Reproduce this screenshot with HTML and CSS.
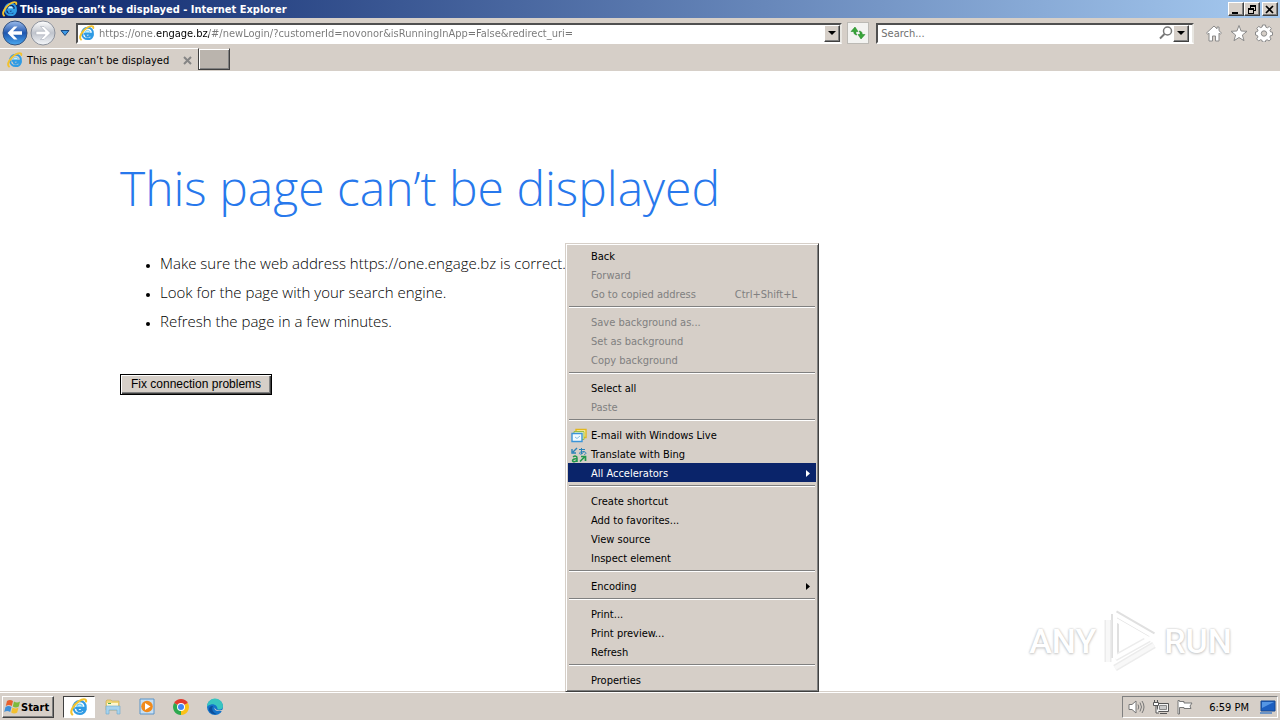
FILE: index.html
```
<!DOCTYPE html>
<html lang="en">
<head>
  <meta charset="UTF-8">
  <title>This page can’t be displayed - Internet Explorer</title>
  <link rel="stylesheet" href="styles.css">
</head>
<body>

  <!-- shared icons -->
  <svg class="defs" width="0" height="0">
    <defs>
      <symbol id="ie" viewBox="0 0 16 16">
        <path d="M4.600 8.700h9.300c.2-3.700-1.800-5.900-5.200-5.900s-5.600 2.400-5.600 5.700 2.300 5.600 5.700 5.600c2.400 0 4-1.100 4.800-3.300h-3.200c-.4.6-.9.9-1.600.9-1.400 0-2.200-1-2.200-2.400" fill="none" stroke="#2f9be4" stroke-width="2"/>
        <path d="M6 7.300h5c-.1-1.300-1-1.900-2.400-1.900S6.200 6 6 7.300z" fill="#e8f5fd" stroke="#6ccaf4" stroke-width="1"/>
        <path d="M2 14.600C-.6 12.200 3.200 6 7.700 3 11.300.600 14.600.300 14.300 3" fill="none" stroke="#f3c22e" stroke-width="1.900" stroke-linecap="round"/>
      </symbol>
    </defs>
  </svg>

  <header class="titlebar">
    <svg class="icon" width="16" height="16"><use href="#ie"/></svg>
    <span class="title">This page can’t be displayed - Internet Explorer</span>
    <div class="window-buttons">
      <button class="win-btn" aria-label="Minimize"><svg width="10" height="9"><path d="M1 7h6v2H1z"/></svg></button>
      <button class="win-btn" aria-label="Restore"><svg width="10" height="9"><path d="M3 0h6v6H7V5h1V2H4v1H3zM1 3h6v6H1zM2 5v3h4V5z" fill-rule="evenodd"/></svg></button>
      <button class="win-btn close" aria-label="Close"><svg width="10" height="9"><path d="M1 1l7 7M8 1L1 8" stroke="#000" stroke-width="1.700"/></svg></button>
    </div>
  </header>

  <nav class="toolbar">
    <button class="plain" aria-label="Back">
      <svg width="26" height="26" viewBox="0 0 26 26">
        <defs><linearGradient id="blue" x2="0" y2="1"><stop offset="0" stop-color="#9dbdec"/><stop offset=".5" stop-color="#1f56ae"/><stop offset="1" stop-color="#4aa9f0"/></linearGradient></defs>
        <circle cx="13" cy="13" r="12" fill="url(#blue)" stroke="#35527f"/>
        <path d="M5.500 13L12 6.500h3.500L11 11.300h9v3.400h-9l4.500 4.800H12z" fill="#fff"/>
      </svg>
    </button>
    <button class="plain" aria-label="Forward">
      <svg width="26" height="26" viewBox="0 0 26 26">
        <defs><linearGradient id="silver" x2="0" y2="1"><stop offset="0" stop-color="#fff"/><stop offset=".5" stop-color="#c0c4cc"/><stop offset="1" stop-color="#f6f8fb"/></linearGradient></defs>
        <circle cx="13" cy="13" r="12" fill="url(#silver)" stroke="#8d929c"/>
        <path d="M20.500 13L14 6.500h-3.500l4.500 4.800H6v3.400h9l-4.500 4.800H14z" fill="#fff" stroke="#a9afba" stroke-width=".6"/>
      </svg>
    </button>
    <button class="plain recent" aria-label="Recent pages">
      <svg width="10" height="8"><path d="M1 1.500h8L5 6.500z" fill="#3d9ae6" stroke="#17457c"/></svg>
    </button>
    <div class="field address">
      <svg class="icon" width="16" height="16"><use href="#ie"/></svg>
      <input class="url" type="text" aria-label="Address" value="https://one.engage.bz/#/newLogin/?customerId=novonor&amp;isRunningInApp=False&amp;redirect_uri=">
      <button class="drop" aria-label="Show address list"><svg width="8" height="4"><path d="M0 0h8L4 4z"/></svg></button>
    </div>
    <button class="refresh" aria-label="Refresh">
      <svg width="16" height="16" viewBox="0 0 16 16"><path d="M5 2L1 6.500h2.800V7c0 2 1.200 2.800 3.200 3-1-1-1.200-2-1-3.500h2z" fill="#3aa63a" stroke="#16801e" stroke-width=".5"/><path d="M11 14l4-4.500h-2.800V9c0-2-1.200-2.800-3.200-3 1 1 1.200 2 1 3.500H8z" fill="#3aa63a" stroke="#16801e" stroke-width=".5"/></svg>
    </button>
    <div class="field search">
      <input type="text" aria-label="Search" placeholder="Search...">
      <svg width="14" height="14" viewBox="0 0 14 14"><circle cx="8.500" cy="5" r="4" fill="none" stroke="#777" stroke-width="1.500"/><path d="M5.500 8L1 12.500" stroke="#777" stroke-width="2"/></svg>
      <button class="drop" aria-label="Search options"><svg width="8" height="4"><path d="M0 0h8L4 4z"/></svg></button>
    </div>
    <div class="tools">
      <button class="plain" aria-label="Home"><svg width="18" height="18" viewBox="0 0 18 18"><path d="M9 2L1.500 9l1.300 1.200L4 9.200V17h3.500v-5h3v5H14V9.200l1.200 1 1.300-1.200L14 6.700V3h-2v1.800z" fill="#fff" stroke="#8a8a8a"/></svg></button>
      <button class="plain" aria-label="Favorites"><svg width="18" height="18" viewBox="0 0 18 18"><path d="M9 1.500l2.100 5.500 5.900.3-4.600 3.700 1.600 5.700-5-3.200-5 3.200L5.600 11 1 7.300 6.900 7z" fill="#fff" stroke="#8a8a8a"/></svg></button>
      <button class="plain" aria-label="Tools"><svg width="18" height="18" viewBox="0 0 18 18"><path d="M7.500 1h3l.4 2.200 1.500.6 1.900-1.300 2 2-1.300 1.900.6 1.500 1.900.3v3l-2 .4-.6 1.500 1.200 1.900-2 2-1.900-1.200-1.500.6-.3 1.600h-3l-.4-1.700-1.500-.6-1.800 1.300-2.100-2.100L3 13l-.6-1.500L.5 11V8l1.900-.4L3 6.100 1.700 4.400l2.100-2 1.800 1.200 1.500-.6z" fill="#fff" stroke="#8a8a8a"/><circle cx="9" cy="9.500" r="2.700" fill="#d6cfc8" stroke="#8a8a8a"/></svg></button>
    </div>
  </nav>

  <div class="tabs">
    <div class="tab">
      <svg class="icon" width="16" height="16"><use href="#ie"/></svg>
      <span>This page can’t be displayed</span>
      <button class="plain tab-close" aria-label="Close tab"><svg width="9" height="9"><path d="M1 1l7 7M8 1L1 8" stroke="#858585" stroke-width="2"/></svg></button>
    </div>
    <button class="new-tab" aria-label="New tab"></button>
  </div>

  <main class="page">
    <h1>This page can’t be displayed</h1>
    <ul>
      <li>Make sure the web address https://one.engage.bz is correct.</li>
      <li>Look for the page with your search engine.</li>
      <li>Refresh the page in a few minutes.</li>
    </ul>
    <button class="fix">Fix connection problems</button>

    <div class="watermark">
      <span>ANY</span>
      <svg width="60" height="64" viewBox="0 0 60 64">
        <g fill="none" stroke-linejoin="round">
          <path d="M15 5v44M15 5l38 22" stroke="#e0e0e0" stroke-width="8"/>
          <path d="M8 11v42M15 49l34-19M15 59l39-23" stroke="#ececec" stroke-width="7"/>
          <path d="M8 11v42M15 59l39-23" stroke="#f8f8f8" stroke-width="4"/>
          <path d="M15 49V5l38 22-4 3-33-19M15 49l34-19" stroke="#fff" stroke-width="4"/>
        </g>
      </svg>
      <span>RUN</span>
    </div>
  </main>

  <footer class="taskbar">
    <button class="start">
      <svg width="17" height="16" viewBox="0 0 17 16"><path d="M3 2c2-1.400 4-1.300 6 0L7.800 7c-2-1.200-4-1.200-6 0z" fill="#e8602c"/><path d="M10 2.500c2 1.200 4 1.200 6 0L14.800 7.600c-2 1.200-4 1.200-6 0z" fill="#7dba3c"/><path d="M1.500 8c2-1.200 4-1.200 6 0l-1.300 5c-2-1.200-4-1.200-6 0z" fill="#3f8fd8"/><path d="M8.500 8.600c2 1.200 4 1.200 6 0l-1.300 5c-2 1.200-4 1.200-6 0z" fill="#f3c02f"/></svg>
      Start
    </button>
    <button class="task active" aria-label="Internet Explorer"><svg width="18" height="18"><use href="#ie"/></svg></button>
    <button class="task" aria-label="Explorer"><svg width="18" height="18" viewBox="0 0 18 18"><path d="M2 3l1-1h4l1 1h7v9H2z" fill="#efd678" stroke="#c9a94a" stroke-width=".6"/><path d="M3 5h11v3H3z" fill="#fff6cf"/><path d="M4 5h3v1H4z" fill="#4caf50"/><path d="M2 8h14v8h-3v-4H5v4H2z" fill="#a6d3ee" stroke="#6da9cc" stroke-width=".6"/></svg></button>
    <button class="task" aria-label="Media Player"><svg width="18" height="18" viewBox="0 0 18 18"><path d="M2 1h14v15H2z" fill="#c7dff3" stroke="#5b94c8"/><circle cx="9" cy="8.500" r="5.800" fill="#f08a1c"/><path d="M7 5l5.500 3.500L7 12z" fill="#fff"/></svg></button>
    <button class="task" aria-label="Chrome"><svg width="18" height="18" viewBox="0 0 18 18"><path d="M9 9L2.100 5A8 8 0 0 1 15.900 5z" fill="#e33b2e"/><path d="M9 9l6.900-4A8 8 0 0 1 9 17z" fill="#fbc116"/><path d="M9 9v8A8 8 0 0 1 2.100 5z" fill="#2da94f"/><circle cx="9" cy="9" r="4" fill="#fff"/><circle cx="9" cy="9" r="3" fill="#4285f4"/></svg></button>
    <button class="task" aria-label="Edge"><svg width="18" height="18" viewBox="0 0 18 18"><circle cx="9" cy="9" r="8" fill="#1473c9"/><path d="M1 9a8 8 0 0 1 16-1c0 3-2.500 4-5.500 3.500C12 8 8 5.500 5 6.500 3 7 1.500 8 1 9z" fill="#38c5c0"/><path d="M7 8c-2 3 0 7 4 8-5 1-8-2-8-5 0-2 2-3.500 4-3z" fill="#0c4f9c"/><path d="M8.500 9.500c1 2.500 4 3.500 7.500 2.500l1.500-1-.5 2h-3c-3 0-6-.5-5.500-3.500z" fill="#d6cfc8"/></svg></button>
    <div class="tray">
      <svg width="18" height="16" viewBox="0 0 18 16"><path d="M1 5.500h3L8 2v12l-4-3.500H1z" fill="#fff" stroke="#777"/><path d="M10 5.500q1.500 2.500 0 5M12 3.500q3 4.500 0 9M14 2q4 6 0 12" fill="none" stroke="#777"/></svg>
      <svg width="18" height="16" viewBox="0 0 18 16"><path d="M5.500 4.500h11v8h-11zM8 14.500h7" fill="#f4f4f4" stroke="#555"/><path d="M7.500 6.500h7v4h-7z" fill="#c9c9c9" stroke="#888"/><path d="M1.500 3.500h5v3h-5zM2.500 1v2M5.500 1v2M4 7v7h3" fill="#fff" stroke="#555"/></svg>
      <svg width="18" height="16" viewBox="0 0 18 16"><path d="M2 1.500h1.500v1H8v1.500h8l-2 3 1 2.500H8V8.500H3.500V15H2z" fill="#fff" stroke="#777"/></svg>
      <time>6:59 PM</time>
      <svg width="18" height="16" viewBox="0 0 18 16"><path d="M2 2h14v10H2z" fill="#1d5fc0" stroke="#174890"/><path d="M3 3h12L3 9z" fill="#5596e4"/><path d="M1 14h12" stroke="#6c94c6" stroke-width="2"/></svg>
    </div>
  </footer>

  <div class="menu" role="menu">
    <button role="menuitem">Back</button>
    <button role="menuitem" disabled>Forward</button>
    <button role="menuitem" disabled>Go to copied address <span class="key">Ctrl+Shift+L</span></button>
    <hr>
    <button role="menuitem" disabled>Save background as...</button>
    <button role="menuitem" disabled>Set as background</button>
    <button role="menuitem" disabled>Copy background</button>
    <hr>
    <button role="menuitem">Select all</button>
    <button role="menuitem" disabled>Paste</button>
    <hr>
    <button role="menuitem" class="with-icon">
      <svg width="16" height="16" viewBox="0 0 16 16"><path d="M5 1.500h10v8H5z" fill="#fff3b0" stroke="#e3b71c" stroke-width="1.400"/><path d="M3 3.500h10v8H3z" fill="#e9f2c4" stroke="#9bbd45"/><path d="M1 5.500h10v8H1z" fill="#f3fbff" stroke="#3a94d8" stroke-width="1.400"/><path d="M4 9l2 1.500L9 8" fill="none" stroke="#83bde4"/></svg>
      E-mail with Windows Live
    </button>
    <button role="menuitem" class="with-icon">
      <svg width="16" height="16" viewBox="0 0 16 16"><path d="M6 1L2 5M1 2v4h4" fill="none" stroke="#2b83b8" stroke-width="1.400"/><path d="M8 2.500h6M10.500 1v6M13 4c-1 3-4 4-4.500 2.500S12 4 14 5s.5 2.500-1 2.500" fill="none" stroke="#2b83b8"/><path d="M2 10c2-1.500 4-1 4 1v4M6 12c-3-.5-4.500.5-4.500 1.800S5 15 6 13" fill="none" stroke="#23984c" stroke-width="1.500"/><path d="M9 14.500l5-5M10 9.500h4.500V14" fill="none" stroke="#23984c" stroke-width="1.700"/></svg>
      Translate with Bing
    </button>
    <button role="menuitem" class="selected">All Accelerators <svg class="arrow" width="4" height="7"><path d="M0 0v7l4-3.500z"/></svg></button>
    <hr>
    <button role="menuitem">Create shortcut</button>
    <button role="menuitem">Add to favorites...</button>
    <button role="menuitem">View source</button>
    <button role="menuitem">Inspect element</button>
    <hr>
    <button role="menuitem">Encoding <svg class="arrow" width="4" height="7"><path d="M0 0v7l4-3.500z"/></svg></button>
    <hr>
    <button role="menuitem">Print...</button>
    <button role="menuitem">Print preview...</button>
    <button role="menuitem">Refresh</button>
    <hr>
    <button role="menuitem">Properties</button>
  </div>

</body>
</html>
```
FILE: styles.css
```
* {
  box-sizing: border-box;
}
body {
  margin: 0;
  min-height: 100vh;
  display: flex;
  flex-direction: column;
  background: #fff;
  color: #000;
  font-family: "DejaVu Sans Condensed", "DejaVu Sans", sans-serif;
  font-size: 11px;
}
button, input {
  font: inherit;
  color: inherit;
  padding: 0;
  border: none;
  background: none;
}
svg {
  display: block;
  flex: none;
}
.defs {
  position: absolute;
}
.titlebar {
  height: 18px;
  display: flex;
  align-items: center;
  padding: 0 2px;
  background: linear-gradient(to right, #0a246a, #a6caf0);
  color: #fff;
  font-weight: bold;
}
.title {
  flex: 1;
  padding-left: 2px;
}
.window-buttons {
  display: flex;
}
.win-btn, .drop, .start {
  background: #d6cfc8;
  border: 1px solid;
  border-color: #fff #404040 #404040 #fff;
  box-shadow: inset -1px -1px #808080;
}
.win-btn {
  width: 16px;
  height: 14px;
  padding: 1px 2px;
}
.close {
  margin-left: 2px;
}
.toolbar {
  height: 30px;
  display: flex;
  align-items: center;
  padding: 0 7px 0 2px;
  background: #d6cfc8;
}
.plain {
  display: flex;
}
.toolbar > .plain {
  margin-right: 2px;
}
.toolbar > .recent {
  margin: 0 6px 0 2px;
}
.field {
  height: 21px;
  display: flex;
  align-items: center;
  background: #fff;
  border: 2px solid;
  border-color: #505050 #e8e6e1 #fff #505050;
}
.field input {
  flex: 1;
  min-width: 0;
  outline: none;
}
.address {
  flex: 1;
  gap: 4px;
  padding-left: 1px;
}
/* the domain is darker than the rest of the address */
.address .url {
  background: linear-gradient(to right, #777 57px, #000 57px, #000 110px, #777 110px);
  background-clip: text;
  -webkit-background-clip: text;
  -webkit-text-fill-color: transparent;
}
.drop {
  width: 16px;
  height: 17px;
  display: flex;
  align-items: center;
  justify-content: center;
}
.refresh {
  width: 22px;
  height: 22px;
  margin: 0 7px 0 5px;
  padding: 2px;
  background: #f3f3f1;
  border: 1px solid #bcbab5;
}
.search {
  width: 25%;
  padding: 0 3px;
}
.search input::placeholder {
  color: #707070;
  opacity: 1;
}
.tools {
  display: flex;
  gap: 7px;
  padding-left: 11px;
}
.tabs {
  height: 23px;
  display: flex;
  align-items: flex-start;
  background: #d6cfc8;
}
.tab {
  width: 198px;
  height: 23px;
  display: flex;
  align-items: center;
  gap: 4px;
  padding: 0 6px 0 7px;
  border-top: 1px solid #fff;
}
.tab span {
  flex: 1;
}
.new-tab {
  width: 32px;
  height: 22px;
  background: #bab4ad;
  border: 1px solid #404040;
  border-top-color: #d6cfc8;
  box-shadow: inset 1px 1px #fff, inset -1px -1px #808080;
}
.page {
  flex: 1;
  position: relative;
  padding: 83px 120px 0;
  font-family: "Open Sans", sans-serif;
  font-size: 15px;
  font-weight: 300;
}
h1 {
  margin: 0;
  color: #2778ec;
  font-size: 48px;
  font-weight: 300;
  line-height: 68px;
}
ul {
  margin: 27px 0 36px;
  padding-left: 40px;
}
li {
  line-height: 29px;
}
li::marker {
  font-size: 10px;
}
.fix {
  height: 21px;
  padding: 0 10px;
  background: #d6cfc8;
  border: 1px solid #000;
  box-shadow: inset 1px 1px #fff, inset -1px -1px #404040, inset -2px -2px #808080;
  font-family: "Liberation Sans", Arial, sans-serif;
  font-size: 12px;
  font-weight: normal;
}
.watermark {
  position: absolute;
  right: 48px;
  bottom: 18px;
  display: flex;
  align-items: center;
  gap: 4px;
  color: #fff;
  font-family: Roboto, sans-serif;
  font-size: 34px;
  font-weight: 500;
  text-shadow: 0 0 2px #bbb, 0 1px 3px #ccc;
}
.taskbar {
  height: 29px;
  display: flex;
  align-items: center;
  padding: 3px 2px 1px;
  background: #d6cfc8;
  border-top: 1px solid #d6cfc8;
  box-shadow: inset 0 1px #fff;
}
.start {
  height: 22px;
  display: flex;
  align-items: center;
  padding: 0 4px 0 1px;
  margin-right: 9px;
  font-weight: bold;
}
.task {
  width: 32px;
  height: 22px;
  margin-right: 2px;
  display: flex;
  align-items: center;
  justify-content: center;
}
.active {
  background: #fff;
  border: 1px solid;
  border-color: #404040 #fff #fff #404040;
}
.tray {
  height: 22px;
  margin-left: auto;
  display: flex;
  align-items: center;
  gap: 6px;
  padding: 0 0 0 5px;
  border: 1px solid;
  border-color: #808080 #fff #fff #808080;
}
.tray time {
  padding: 0 4px 0 9px;
}
.menu {
  position: absolute;
  left: 565px;
  top: 243px;
  width: 254px;
  padding: 2px;
  background: #d6cfc8;
  border: 1px solid;
  border-color: #d6cfc8 #404040 #404040 #d6cfc8;
  box-shadow: inset 1px 1px #fff, inset -1px -1px #808080;
}
.menu button {
  width: 100%;
  height: 19px;
  display: flex;
  align-items: center;
  padding: 2px 6px 0 23px;
  text-align: left;
}
.menu button:disabled {
  color: #808080;
}
.menu .with-icon {
  gap: 4px;
  padding-left: 3px;
}
.menu .selected {
  background: #0a246a;
  color: #fff;
}
.key {
  margin-left: auto;
  padding-right: 13px;
}
.arrow {
  margin-left: auto;
  fill: currentColor;
}
.menu hr {
  height: 2px;
  margin: 3px 1px 4px;
  border: none;
  border-top: 1px solid #808080;
  border-bottom: 1px solid #fff;
}
```
